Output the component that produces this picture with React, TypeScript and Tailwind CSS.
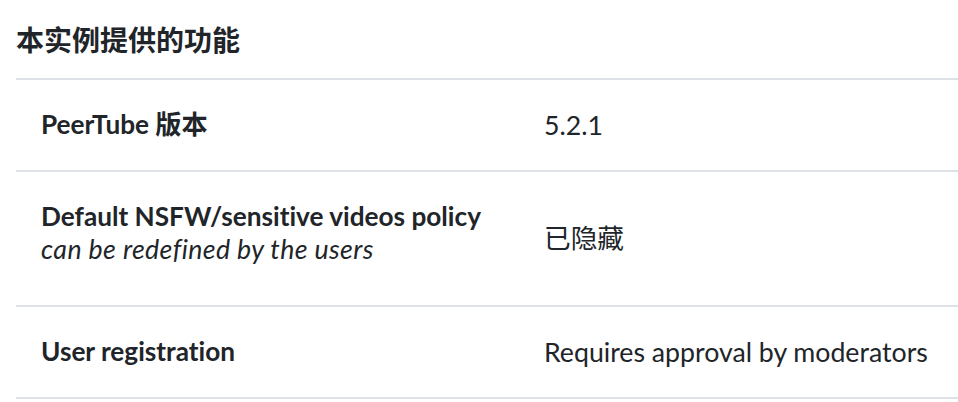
import React from 'react';

const rows: { label: string; note?: string; value: string }[] = [
  { label: 'PeerTube 版本', value: '5.2.1' },
  {
    label: 'Default NSFW/sensitive videos policy',
    note: 'can be redefined by the users',
    value: '已隐藏',
  },
  { label: 'User registration', value: 'Requires approval by moderators' },
];

export default function App() {
  return (
    <div
      className="w-[958px] h-[402px] bg-white text-[#212529] pl-4 overflow-hidden [font-variant-ligatures:none]"
      style={{ fontFamily: 'Lato, "Noto Sans CJK SC", sans-serif' }}
    >
      <h2 className="pt-[20px] pb-[18px] text-[28px] leading-[40px] font-bold">本实例提供的功能</h2>

      <div className="border-t-2 border-[#dee2e6]">
        {rows.map((row) => (
          <div
            key={row.label}
            className="grid grid-cols-[503px_1fr] border-b-2 border-[#dee2e6] text-[26.7px] leading-[33px]"
          >
            <div className={`px-[25px] pt-[28px] ${row.note ? 'pb-[39px]' : 'pb-[29px]'}`}>
              <div className="font-bold text-[26.2px]">{row.label}</div>
              {row.note && <div className="italic tracking-[0.4px]">{row.note}</div>}
            </div>
            <div className="px-[25px] flex items-center">{row.value}</div>
          </div>
        ))}
      </div>
    </div>
  );
}
